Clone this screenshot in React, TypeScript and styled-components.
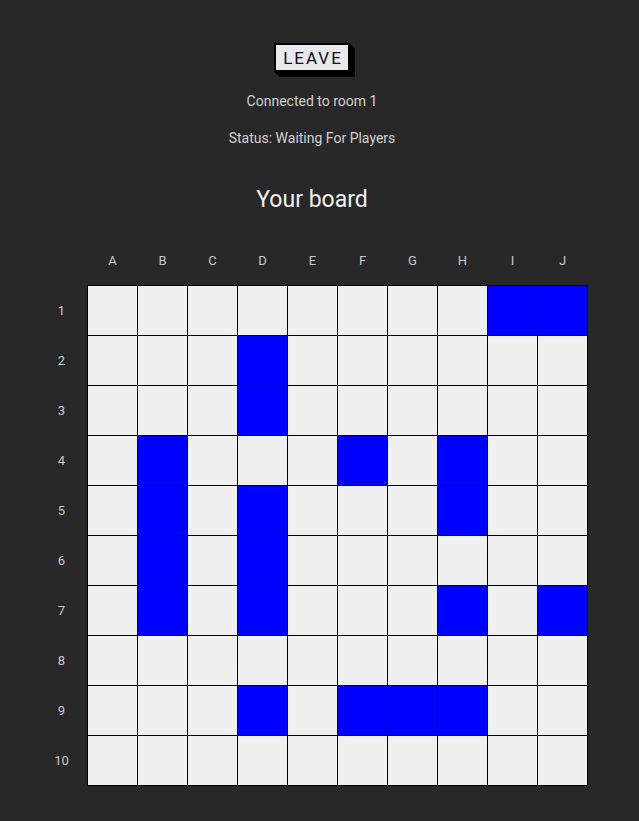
import React from "react";
import styled, { createGlobalStyle } from "styled-components";

const Global = createGlobalStyle`
  html, body { margin: 0; padding: 0; background: #282828; }
  body { font-family: Roboto, "Liberation Sans", sans-serif; color: #dcdcdc; }
`;

const Page = styled.div`
  width: 624px;
  min-height: 821px;
  display: flex;
  flex-direction: column;
  align-items: center;
  padding-top: 43px;
  box-sizing: border-box;
`;

const LeaveButton = styled.button`
  font-family: Roboto, "Liberation Sans", sans-serif;
  font-size: 17px;
  letter-spacing: 2px;
  color: #111;
  background: #e8e8ee;
  border: 2px solid #000;
  height: 29px;
  width: 76px;
  padding: 0 0 0 2px;
  display: flex;
  align-items: center;
  justify-content: center;
  box-shadow: 1px 1px 0 #000, 2px 2px 0 #000, 3px 3px 0 #000, 4px 4px 0 #000, 5px 5px 0 #000;
  cursor: pointer;
`;

const Info = styled.p<{ $top: number }>`
  margin: ${(p) => p.$top}px 0 0;
  font-size: 14px;
  line-height: 20px;
  color: #d0d0d0;
`;

const Title = styled.h2`
  margin: 37px 0 0;
  font-size: 23px;
  font-weight: 400;
  line-height: 30px;
  color: #f0f0f0;
`;

const Board = styled.div`
  margin-top: 20px;
  display: grid;
  grid-template-columns: 50px 501px;
  grid-template-rows: 50px 501px;
`;

const ColLabels = styled.div`
  grid-column: 2;
  display: grid;
  grid-template-columns: repeat(10, 50px);
  padding-left: 1px;
`;

const RowLabels = styled.div`
  grid-column: 1;
  grid-row: 2;
  display: grid;
  grid-template-rows: repeat(10, 50px);
`;

const Label = styled.div`
  display: flex;
  align-items: center;
  justify-content: center;
  font-size: 13px;
  color: #c8c8c8;
`;

const Grid = styled.div`
  grid-column: 2;
  grid-row: 2;
  display: grid;
  grid-template-columns: repeat(10, 49px);
  grid-template-rows: repeat(10, 49px);
  gap: 1px;
  padding: 1px;
  background: #000;
`;

const Cell = styled.div<{ $ship: boolean }>`
  background: ${(p) => (p.$ship ? "#0000ff" : "#f0f0f0")};
`;

const cols = ["A", "B", "C", "D", "E", "F", "G", "H", "I", "J"];
const ships: Record<number, string[]> = {
  1: ["I", "J"],
  2: ["D"],
  3: ["D"],
  4: ["B", "F", "H"],
  5: ["B", "D", "H"],
  6: ["B", "D"],
  7: ["B", "D", "H", "J"],
  8: [],
  9: ["D", "F", "G", "H"],
  10: [],
};

export default function App() {
  const rows = Array.from({ length: 10 }, (_, i) => i + 1);
  return (
    <>
      <Global />
      <Page>
        <LeaveButton>LEAVE</LeaveButton>
        <Info $top={19}>Connected to room 1</Info>
        <Info $top={17}>Status: Waiting For Players</Info>
        <Title>Your board</Title>
        <Board>
          <ColLabels>
            {cols.map((c) => (
              <Label key={c}>{c}</Label>
            ))}
          </ColLabels>
          <RowLabels>
            {rows.map((r) => (
              <Label key={r}>{r}</Label>
            ))}
          </RowLabels>
          <Grid>
            {rows.map((r) =>
              cols.map((c) => <Cell key={`${c}${r}`} $ship={ships[r].includes(c)} />)
            )}
          </Grid>
        </Board>
      </Page>
    </>
  );
}
